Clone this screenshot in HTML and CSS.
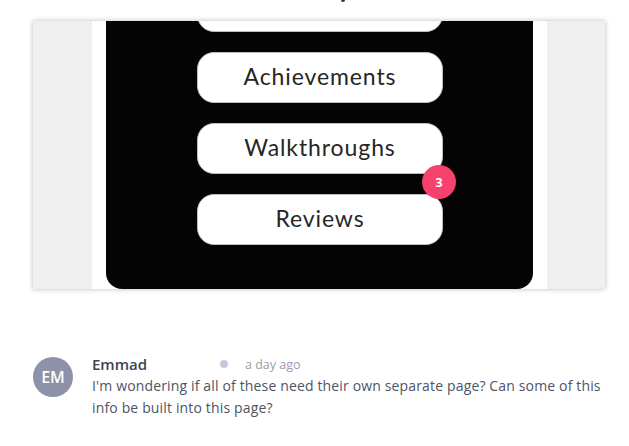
FILE: index.html
```html
<!DOCTYPE html>
<html>
<head>
<meta charset="utf-8">
<link rel="stylesheet" href="styles.css">
</head>
<body>
<div class="page">
  <div class="top">
    <span class="tail"></span>
  </div>
  <div class="card">
    <div class="screen">
      <div class="phone">
        <div class="menu">
          <div class="btn"></div>
          <div class="btn">Achievements</div>
          <div class="btn">Walkthroughs</div>
          <div class="btn">Reviews</div>
        </div>
      </div>
    </div>
    <div class="badge">3</div>
  </div>
  <div class="comment">
    <div class="avatar">EM</div>
    <div class="content">
      <div class="meta">
        <span class="name">Emmad</span>
        <span class="dot"></span>
        <span class="time">a day ago</span>
      </div>
      <p class="text">I'm wondering if all of these need their own separate page? Can some of this info be built into this page?</p>
    </div>
  </div>
</div>
</body>
</html>
```
FILE: styles.css
```css
html, body {
  margin: 0;
  padding: 0;
  background: #ffffff;
}
.page {
  width: 629px;
  height: 446px;
  overflow: hidden;
  font-family: "Open Sans", "Liberation Sans", sans-serif;
}
.top {
  height: 21px;
  display: flex;
}
.tail {
  display: block;
  width: 4px;
  height: 2px;
  margin-left: 341px;
  background: #2d3348;
  border-radius: 0 0 2px 2px;
}
.card {
  position: relative;
  margin-left: 33px;
  width: 572px;
  height: 268px;
  background: #efefef;
  box-shadow: 0 0 5px rgba(0, 0, 0, 0.28);
  display: flex;
}
.screen {
  margin-left: 59px;
  width: 427px;
  padding: 0 14px;
  background: #ffffff;
  display: flex;
}
.phone {
  flex: 1;
  background: #040404;
  border-radius: 0 0 16px 16px;
  overflow: hidden;
  display: flex;
  justify-content: center;
}
.menu {
  margin-top: -40px;
  display: flex;
  flex-direction: column;
  gap: 20px;
  margin-left: 1px;
}
.btn {
  box-sizing: border-box;
  width: 246px;
  height: 51px;
  padding-bottom: 4px;
  border: 1px solid #bdbdbd;
  background: #ffffff;
  border-radius: 17px;
  display: flex;
  align-items: center;
  justify-content: center;
  font-family: "Lato", sans-serif;
  font-weight: 400;
  font-size: 23px;
  letter-spacing: 0.9px;
  color: #262626;
}
.badge {
  position: absolute;
  left: 389px;
  top: 144px;
  width: 34px;
  height: 34px;
  border-radius: 50%;
  background: #f5416c;
  color: #ffffff;
  font-family: "Open Sans", sans-serif;
  font-weight: 700;
  font-size: 13px;
  display: flex;
  align-items: center;
  justify-content: center;
}
.comment {
  display: flex;
  margin-top: 68px;
  padding-left: 33px;
  gap: 19px;
}
.avatar {
  flex: none;
  width: 40px;
  height: 40px;
  border-radius: 50%;
  background: #8d92a8;
  color: #ffffff;
  font-size: 16px;
  font-weight: 600;
  display: flex;
  align-items: center;
  justify-content: center;
}
.content {
  margin-top: -4px;
  width: 520px;
}
.meta {
  display: flex;
  align-items: center;
  height: 22px;
}
.name {
  font-size: 15px;
  font-weight: 600;
  color: #3d4354;
  width: 128px;
}
.dot {
  width: 8px;
  height: 8px;
  border-radius: 50%;
  background: #c6c9da;
  margin-right: 17px;
}
.time {
  font-size: 12.5px;
  color: #9a9dac;
}
.text {
  margin: 0;
  font-size: 14px;
  letter-spacing: 0.15px;
  line-height: 22px;
  color: #4d5468;
}
```
